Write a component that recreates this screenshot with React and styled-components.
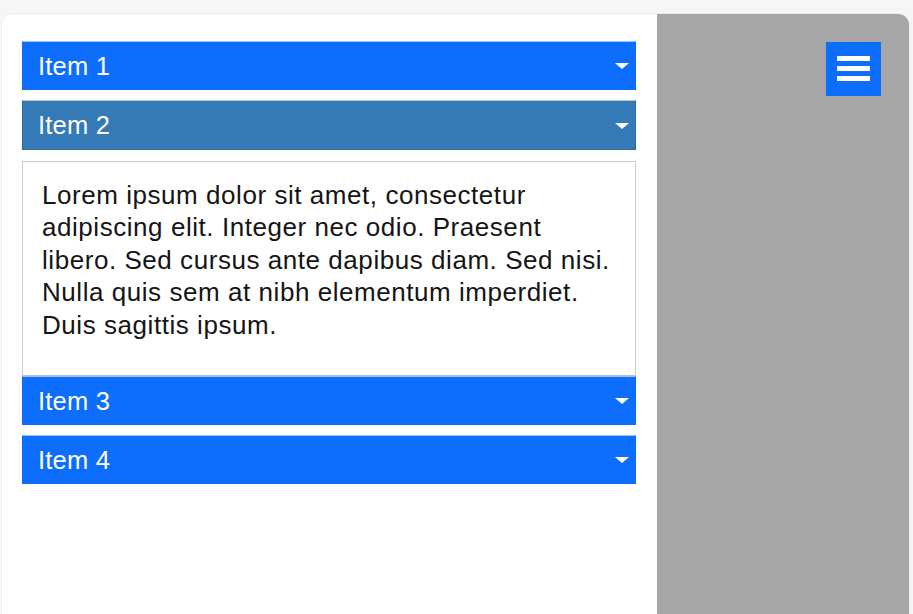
import React from 'react';
import styled, { createGlobalStyle } from 'styled-components';

const GlobalStyle = createGlobalStyle`
  html, body {
    margin: 0;
    padding: 0;
    background: #f6f6f6;
    overflow: hidden;
  }
  body {
    font-family: "Liberation Sans", Arial, sans-serif;
  }
`;

const items = [
  { id: 1, title: 'Item 1' },
  {
    id: 2,
    title: 'Item 2',
    body:
      'Lorem ipsum dolor sit amet, consectetur adipiscing elit. Integer nec odio. Praesent libero. Sed cursus ante dapibus diam. Sed nisi. Nulla quis sem at nibh elementum imperdiet. Duis sagittis ipsum.',
  },
  { id: 3, title: 'Item 3' },
  { id: 4, title: 'Item 4' },
];

const App = () => {
  const openId = 2;

  return (
    <>
      <GlobalStyle />
      <Page>
        <Card>
          <Main>
            {items.map((item) => (
              <Section key={item.id} $open={item.id === openId}>
                <Header $open={item.id === openId}>
                  <span>{item.title}</span>
                  <Caret />
                </Header>
                {item.id === openId && <Panel>{item.body}</Panel>}
              </Section>
            ))}
          </Main>
          <Sidebar>
            <MenuButton aria-label="Menu">
              <svg width="33" height="26" viewBox="0 0 33 26">
                <rect x="0" y="0" width="33" height="5" fill="#fff" />
                <rect x="0" y="10" width="33" height="5" fill="#fff" />
                <rect x="0" y="20" width="33" height="5" fill="#fff" />
              </svg>
            </MenuButton>
          </Sidebar>
        </Card>
      </Page>
    </>
  );
};

const Page = styled.div`
  padding: 13px 3px 0 1px;
  height: 614px;
  box-sizing: border-box;
  overflow: hidden;
`;

const Card = styled.div`
  display: flex;
  min-height: 640px;
  background: #fff;
  border: 1px solid #ececec;
  border-radius: 12px;
  overflow: hidden;
`;

const Main = styled.div`
  width: 655px;
  box-sizing: border-box;
  padding: 27px 21px 0 20px;
  display: flex;
  flex-direction: column;
`;

const Section = styled.div`
  margin-bottom: ${(p) => (p.$open ? '0' : '10px')};
`;

const Header = styled.div`
  display: flex;
  align-items: center;
  justify-content: space-between;
  box-sizing: border-box;
  height: ${(p) => (p.$open ? '50px' : '49px')};
  padding: 1px 6px 0 15px;
  color: #fff;
  font-size: 25.5px;
  letter-spacing: 0.2px;
  background: ${(p) => (p.$open ? '#337ab7' : '#0d6efd')};
  border: 1px solid ${(p) => (p.$open ? '#2e6da4' : '#0d6efd')};
  border-top-color: ${(p) => (p.$open ? '#b9c9d9' : '#9cc2fb')};
  cursor: pointer;
`;

const Caret = styled.span`
  width: 0;
  height: 0;
  border-left: 7px solid transparent;
  border-right: 7px solid transparent;
  border-top: 6px solid #fff;
`;

const Panel = styled.div`
  margin-top: 11px;
  padding: 17px 21px 34px 19px;
  border: 1px solid #cccccc;
  border-bottom-color: #bdbdbd;
  color: #151515;
  font-size: 26px;
  letter-spacing: 0.55px;
  line-height: 32.4px;
`;

const Sidebar = styled.div`
  flex: 1;
  background: #a6a6a6;
  display: flex;
  justify-content: flex-end;
  align-items: flex-start;
  padding: 28px 28px 0 0;
`;

const MenuButton = styled.button`
  width: 55px;
  height: 54px;
  border: none;
  padding: 0;
  background: #0d6efd;
  display: flex;
  align-items: center;
  justify-content: center;
  cursor: pointer;
`;

export default App;
